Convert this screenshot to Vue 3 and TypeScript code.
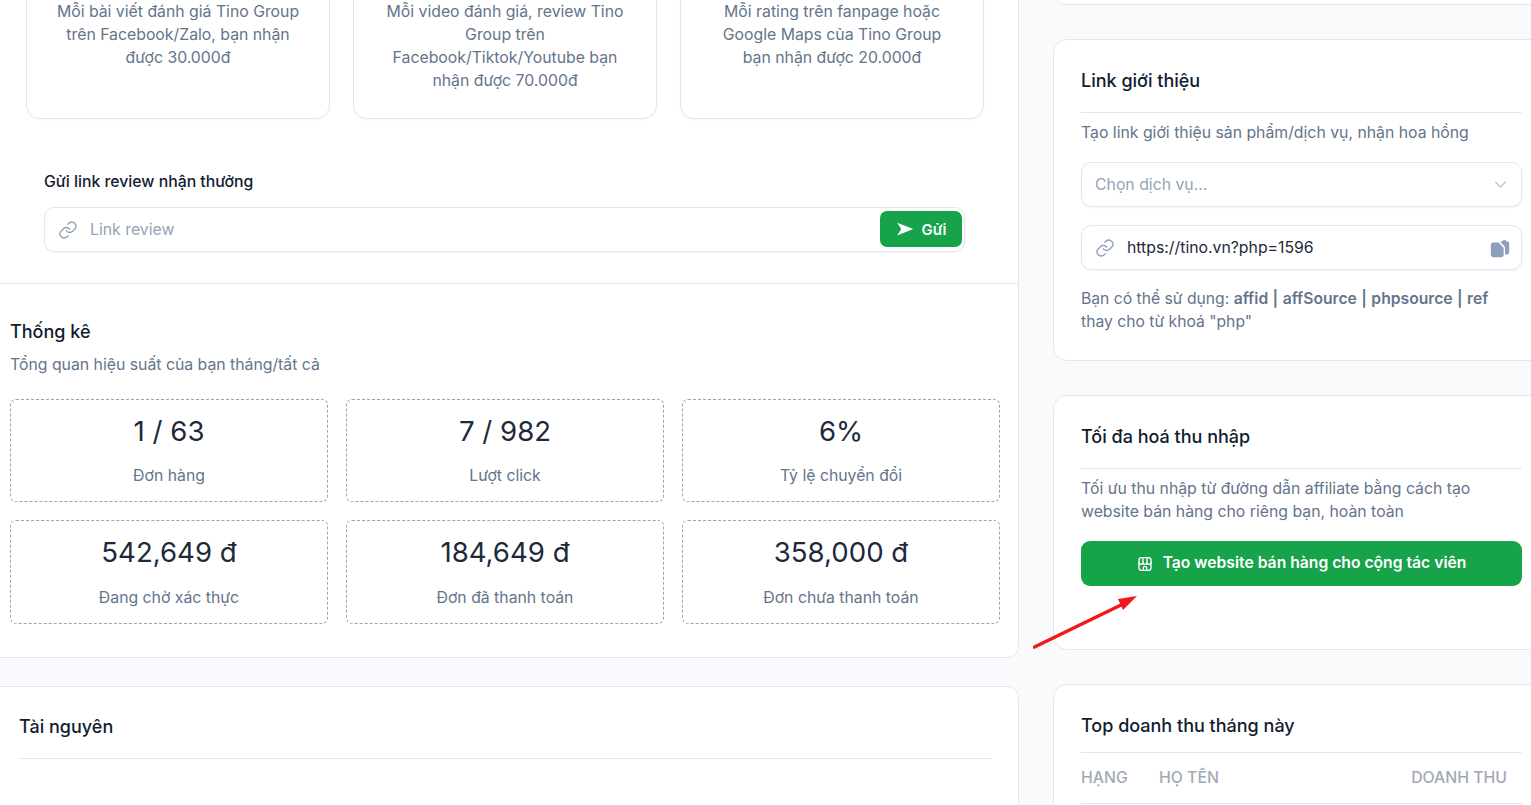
<script setup lang="ts">
const tasks = [
  'Mỗi bài viết đánh giá Tino Group trên Facebook/Zalo, bạn nhận được 30.000đ',
  'Mỗi video đánh giá, review Tino Group trên Facebook/Tiktok/Youtube bạn nhận được 70.000đ',
  'Mỗi rating trên fanpage hoặc Google Maps của Tino Group bạn nhận được 20.000đ',
]

const stats = [
  { value: '1 / 63', label: 'Đơn hàng' },
  { value: '7 / 982', label: 'Lượt click' },
  { value: '6%', label: 'Tỷ lệ chuyển đổi' },
  { value: '542,649 đ', label: 'Đang chờ xác thực' },
  { value: '184,649 đ', label: 'Đơn đã thanh toán' },
  { value: '358,000 đ', label: 'Đơn chưa thanh toán' },
]
</script>

<template>
  <div class="viewport">
    <div class="layout">
      <main class="left">
        <section class="card program">
          <div class="tasks">
            <div v-for="t in tasks" :key="t" class="task">{{ t }}</div>
          </div>
          <div class="review">
            <div class="review-label">Gửi link review nhận thưởng</div>
            <div class="field review-field">
              <svg class="link-icon" viewBox="0 0 24 24" fill="none" stroke="currentColor" stroke-width="1.7" stroke-linecap="round" stroke-linejoin="round">
                <path d="M10 13a5 5 0 0 0 7.500.5l3-3a5 5 0 0 0-7-7l-1.700 1.700" />
                <path d="M14 11a5 5 0 0 0-7.500-.5l-3 3a5 5 0 0 0 7 7l1.700-1.700" />
              </svg>
              <span class="placeholder">Link review</span>
              <button class="send-btn">
                <svg viewBox="0 0 24 24" fill="currentColor"><path d="M1.500 3.500 23 12 1.500 20.500 7 12z" /></svg>
                Gửi
              </button>
            </div>
          </div>
          <div class="stats-section">
            <h2 class="title">Thống kê</h2>
            <p class="desc">Tổng quan hiệu suất của bạn tháng/tất cả</p>
            <div class="stats">
              <div v-for="s in stats" :key="s.label" class="stat">
                <div class="stat-value">{{ s.value }}</div>
                <div class="stat-label">{{ s.label }}</div>
              </div>
            </div>
          </div>
        </section>
        <section class="card resources">
          <h2 class="title resources-title">Tài nguyên</h2>
        </section>
      </main>

      <aside class="right">
        <div class="side-card stub"></div>

        <section class="side-card link-card">
          <h2 class="title side-title">Link giới thiệu</h2>
          <p class="desc side-desc">Tạo link giới thiệu sản phẩm/dịch vụ, nhận hoa hồng</p>
          <div class="field select-field">
            <span class="placeholder">Chọn dịch vụ...</span>
            <svg class="chevron" viewBox="0 0 24 24" fill="none" stroke="currentColor" stroke-width="1.8" stroke-linecap="round" stroke-linejoin="round"><path d="m4 8 8 8 8-8" /></svg>
          </div>
          <div class="field url-field">
            <svg class="link-icon" viewBox="0 0 24 24" fill="none" stroke="currentColor" stroke-width="1.7" stroke-linecap="round" stroke-linejoin="round">
              <path d="M10 13a5 5 0 0 0 7.500.5l3-3a5 5 0 0 0-7-7l-1.700 1.700" />
              <path d="M14 11a5 5 0 0 0-7.500-.5l-3 3a5 5 0 0 0 7 7l1.700-1.700" />
            </svg>
            <span class="url">https://tino.vn?php=1596</span>
            <svg class="copy-icon" viewBox="0 0 24 24" fill="currentColor">
              <path d="M2 9a3 3 0 0 1 3-3h5.500l5.500 6v7a3 3 0 0 1-3 3H5a3 3 0 0 1-3-3z" />
              <path d="M12 5h2.200a2.800 2.800 0 0 1 5.200 0h.6a2 2 0 0 1 2 2v10a2 2 0 0 1-2 2h-2.500v-8l-5.500-6z" />
            </svg>
          </div>
          <p class="desc hint">
            Bạn có thể sử dụng: <b>affid</b> <b>|</b> <b>affSource</b> <b>|</b> <b>phpsource</b> <b>|</b> <b>ref</b>
            thay cho từ khoá "php"
          </p>
        </section>

        <section class="side-card income-card">
          <h2 class="title side-title">Tối đa hoá thu nhập</h2>
          <p class="desc side-desc">Tối ưu thu nhập từ đường dẫn affiliate bằng cách tạo website bán hàng cho riêng bạn, hoàn toàn</p>
          <button class="cta">
            <svg viewBox="0 0 24 24" fill="none" stroke="currentColor" stroke-width="2" stroke-linecap="round" stroke-linejoin="round">
              <rect x="3" y="2.500" width="18" height="19" rx="4" />
              <path d="M3 9.500a3 3 0 0 0 6 0 3 3 0 0 0 6 0 3 3 0 0 0 6 0" />
              <path d="M9 2.500v7M15 2.500v7" />
              <path d="M9.500 21.500V18a2.500 2.500 0 0 1 5 0v3.500" />
            </svg>
            <span>Tạo website bán hàng cho cộng tác viên</span>
          </button>
          <svg class="arrow" viewBox="0 0 106 54" fill="none">
            <path d="M1.500 52 89 9.500" stroke="#f01818" stroke-width="3.500" stroke-linecap="round" />
            <path d="M104 1 85 4 90 15z" fill="#f01818" />
          </svg>
        </section>

        <section class="side-card top-card">
          <h2 class="title side-title">Top doanh thu tháng này</h2>
          <div class="top-head">
            <span class="col-rank">HẠNG</span>
            <span class="col-name">HỌ TÊN</span>
            <span class="col-rev">DOANH THU</span>
          </div>
        </section>
      </aside>
    </div>
  </div>
</template>

<style>
html,
body {
  margin: 0;
  overflow: hidden;
  background: #f8fafc;
}
</style>

<style scoped>
.viewport {
  height: 805px;
  overflow: hidden;
  font-family: Inter, "Noto Sans", sans-serif;
  font-size: 15.8px;
  line-height: 23px;
  color: #64748b;
}

.layout {
  display: grid;
  grid-template-columns: 1019px 497px;
  gap: 34px;
  width: 1550px;
  margin-top: -40px;
  align-items: start;
}

.card {
  background: #fff;
  border: 1px solid #e2e8f0;
  border-left: 0;
  border-radius: 0 12px 12px 0;
}

.program {
  border-top: 0;
}

.tasks {
  display: grid;
  grid-template-columns: repeat(3, 304px);
  gap: 23px;
  padding: 0 34px 0 26px;
}

.task {
  height: 159px;
  box-sizing: border-box;
  padding: 39px 26px 0;
  border: 1px solid #e2e8f0;
  border-radius: 14px;
  background: #fff;
  text-align: center;
  box-shadow: 0 1px 2px rgba(15, 23, 42, 0.04);
}

.review {
  padding: 51px 53px 31px 44px;
  border-bottom: 1px solid #e2e8f0;
}

.review-label {
  font-weight: 500;
  color: #111c30;
  margin-bottom: 14px;
}

.field {
  display: flex;
  align-items: center;
  height: 45px;
  box-sizing: border-box;
  border: 1px solid #e2e8f0;
  border-radius: 10px;
  background: #fff;
  padding: 0 13px;
  box-shadow: 0 1px 2px rgba(15, 23, 42, 0.05);
}

.review-field {
  padding-right: 2px;
}

.link-icon {
  width: 20px;
  height: 20px;
  flex: none;
  color: #94a3b8;
  margin-right: 12px;
}

.placeholder {
  color: #94a3b8;
  flex: 1;
}

.send-btn {
  display: flex;
  align-items: center;
  justify-content: center;
  gap: 8px;
  width: 82px;
  height: 36px;
  margin-top: -1px;
  border: 0;
  border-radius: 7px;
  background: #16a34a;
  color: #fff;
  font: 600 15px Inter, sans-serif;
}

.send-btn svg {
  width: 18px;
  height: 18px;
}

.stats-section {
  padding: 36px 18px 33px 10px;
}

.title {
  margin: 0;
  font-size: 18px;
  line-height: 24px;
  font-weight: 500;
  color: #111c30;
}

.desc {
  margin: 0;
}

.stats-section .desc {
  margin-top: 9px;
}

.stats {
  display: grid;
  grid-template-columns: repeat(3, 318px);
  gap: 18px;
  margin-top: 23px;
}

.stat {
  border: 1px dashed #a1a1b5;
  border-radius: 6px;
  padding: 13px 0 14px;
  text-align: center;
}

.stat-value {
  font-size: 27.6px;
  line-height: 36px;
  color: #1e293b;
  margin-bottom: 15px;
}

.stat:nth-child(n + 4) .stat-value {
  margin-bottom: 16px;
}

.resources {
  margin-top: 28px;
  height: 200px;
  border-radius: 0 12px 0 0;
  padding: 28px 27px 0 19px;
}

.resources-title {
  padding-bottom: 19px;
  border-bottom: 1px solid #e2e8f0;
}

.right {
  display: flex;
  flex-direction: column;
  gap: 34px;
}

.side-card {
  position: relative;
  box-sizing: border-box;
  background: #fff;
  border: 1px solid #e2e8f0;
  border-radius: 14px;
  padding: 29px 27px 0;
}

.stub {
  height: 45px;
  padding: 0;
}

.link-card {
  height: 322px;
}

.income-card {
  height: 255px;
}

.top-card {
  height: 200px;
}

.side-title {
  padding-bottom: 19px;
  border-bottom: 1px solid #e2e8f0;
}

.side-desc {
  padding-top: 8px;
}

.select-field {
  margin-top: 18px;
  justify-content: space-between;
}

.chevron {
  width: 15px;
  height: 15px;
  color: #b6c2d2;
}

.url-field {
  margin-top: 18px;
}

.url {
  flex: 1;
  color: #1e293b;
}

.copy-icon {
  width: 22px;
  height: 22px;
  color: #8d9fbd;
  margin-right: -3px;
}

.hint {
  margin-top: 17px;
  font-size: 15.7px;
}

.hint b {
  font-weight: 600;
  color: #64748b;
}

.cta {
  display: flex;
  align-items: center;
  justify-content: center;
  gap: 10px;
  width: 100%;
  height: 45px;
  margin-top: 18px;
  border: 0;
  border-radius: 9px;
  background: #16a34a;
  color: #fff;
  font: 600 15.7px Inter, sans-serif;
}

.cta span {
  margin-top: -2px;
}

.cta svg {
  width: 16px;
  height: 16px;
}

/* red annotation pointing at the button */
.arrow {
  position: absolute;
  left: -21px;
  top: 199px;
  width: 106px;
  height: 54px;
}

.top-card .side-title {
  padding-bottom: 14px;
}

.top-head {
  display: flex;
  height: 48px;
  padding-bottom: 2px;
  align-items: center;
  border-bottom: 1px solid #e2e8f0;
  font-weight: 500;
  color: #a1a9b8;
  font-size: 15.8px;
}

.col-rank {
  width: 78px;
}

.col-name {
  flex: 1;
}

.col-rev {
  padding-right: 15px;
}
</style>
